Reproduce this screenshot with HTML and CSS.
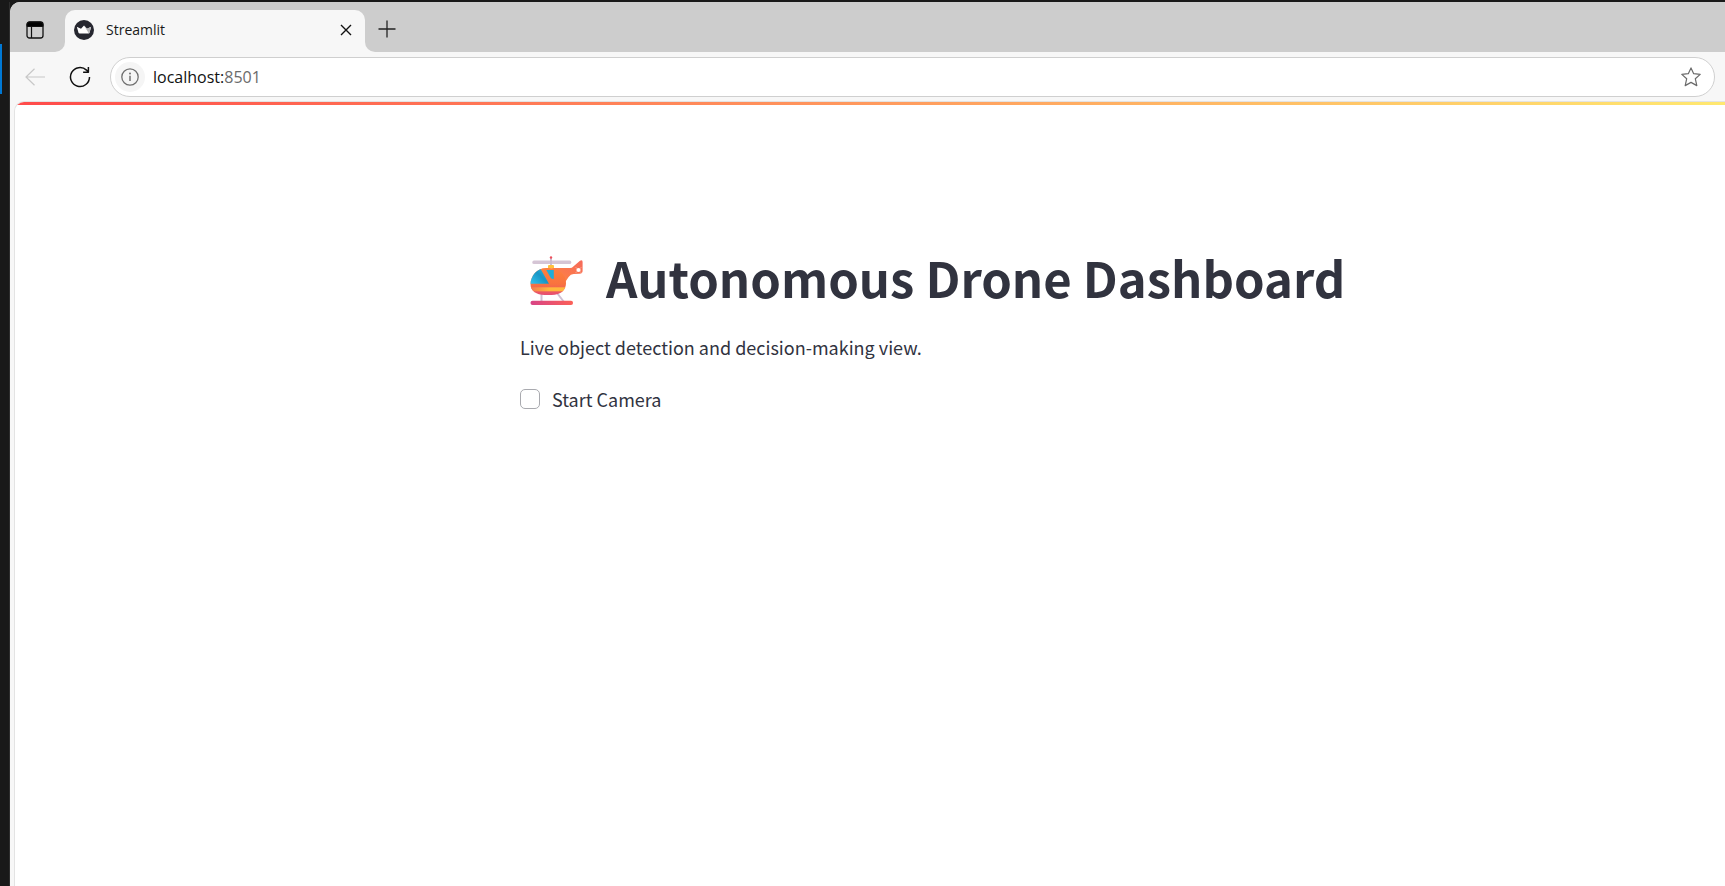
FILE: index.html
```html
<!DOCTYPE html>
<html lang="en">
<head>
<meta charset="utf-8">
<title>Streamlit</title>
<link rel="stylesheet" href="styles.css">
</head>
<body>
<div class="desktop">
  <div class="edge"><div class="edge-accent"></div></div>
  <div class="window">
    <header class="tab-strip">
      <div class="strip-start">
        <button class="icon-button" type="button" aria-label="Tab actions">
          <svg width="18" height="18" viewBox="0 0 18 18"><rect x="1" y="1" width="16" height="16" rx="2.5" fill="none" stroke="#111" stroke-width="1.3"/><path d="M1 5.500V3.500Q1 1 3.500 1h11Q17 1 17 3.500v2z" fill="#000" stroke="#111"/><path d="M5.500 6v11" stroke="#111" stroke-width="1.200"/></svg>
        </button>
      </div>
      <div class="tab">
        <svg width="20" height="20" viewBox="0 0 20 20"><circle cx="10" cy="10" r="10" fill="#262730"/><path d="M2.800 6.800 7 8.800 10 5.600l3 3.200 4.200-2-1.700 6q-.3.800-1.200.8H5.700q-.9 0-1.200-.8z" fill="#fff"/><path d="m13 8.800 4.200-2-1.700 6q-.2.500-.6.700L10 5.600z" fill="#b5b5b8"/></svg>
        <span class="tab-title">Streamlit</span>
        <button class="icon-button" type="button" aria-label="Close tab">
          <svg width="12" height="12" viewBox="0 0 12 12"><path d="m1 1 10 10M11 1 1 11" stroke="#111" stroke-width="1.400"/></svg>
        </button>
      </div>
      <div class="strip-end">
        <button class="icon-button" type="button" aria-label="New tab">
          <svg width="18" height="18" viewBox="0 0 18 18"><path d="M9 .5v17M.5 9h17" stroke="#222" stroke-width="1.300"/></svg>
        </button>
      </div>
    </header>
    <nav class="toolbar">
      <button class="icon-button" type="button" aria-label="Back" disabled>
        <svg width="20" height="18" viewBox="0 0 20 18"><path d="M20 9H1M9.500.8 1 9l8.500 8.200" fill="none" stroke="#c8c8c8" stroke-width="1.200"/></svg>
      </button>
      <button class="icon-button reload" type="button" aria-label="Refresh">
        <svg width="22" height="22" viewBox="0 0 22 22"><path d="M20.500 11a9.500 9.500 0 1 1-3-6.900L19.300 6M19.400 1v5.300h-5.300" fill="none" stroke="#111" stroke-width="1.500" stroke-linejoin="round"/></svg>
      </button>
      <div class="address">
        <button class="icon-button info" type="button" aria-label="Site information">
          <svg width="18" height="18" viewBox="0 0 18 18"><circle cx="9" cy="9" r="8.200" fill="none" stroke="#707070" stroke-width="1.300"/><path d="M9 7.800V13" stroke="#707070" stroke-width="1.500"/><circle cx="9" cy="5.400" r="1" fill="#707070"/></svg>
        </button>
        <span class="url">localhost:<span class="port">8501</span></span>
        <button class="icon-button" type="button" aria-label="Add to favorites">
          <svg width="20" height="20" viewBox="0 0 20 20"><path d="m10 .9 2.700 5.800 6.500.7-4.900 4.300 1.500 6.900L10 15.400l-5.800 3.200 1.500-6.900L.8 7.400l6.500-.7z" fill="none" stroke="#6b6b6b" stroke-width="1.200" stroke-linejoin="round"/></svg>
        </button>
      </div>
    </nav>
    <div class="page">
      <div class="decoration"></div>
      <main class="content">
        <h1 class="title">
          <svg class="helicopter" width="54" height="50" viewBox="0 0 54 50" role="img" aria-label="Helicopter">
            <defs>
              <linearGradient id="body" x1="0" y1="0" x2="0" y2="1"><stop offset="0" stop-color="#ff823f"/><stop offset=".6" stop-color="#f9733e"/><stop offset="1" stop-color="#e44b78"/></linearGradient>
              <linearGradient id="tail" x1="0" y1="1" x2="1" y2="0"><stop offset="0" stop-color="#ff8640"/><stop offset="1" stop-color="#f66a5b"/></linearGradient>
              <linearGradient id="glass" x1="0" y1="1" x2="1" y2="0"><stop offset="0" stop-color="#35c5ef"/><stop offset=".5" stop-color="#1896c6"/><stop offset="1" stop-color="#35c5ef"/></linearGradient>
              <linearGradient id="skid"><stop offset="0" stop-color="#d84486"/><stop offset="1" stop-color="#fb6057"/></linearGradient>
              <linearGradient id="band"><stop offset="0" stop-color="#f37850"/><stop offset=".5" stop-color="#ffb83d"/></linearGradient>
              <clipPath id="hull"><path d="M16 12C7 12 .5 20 .5 28c0 7 6 11 14 11h7C31 39 36 34 36 27c0-8-7-15-17-15z"/></clipPath>
            </defs>
            <path d="M11.500 38v8M27 37l7 9" stroke="#cfc0d4" stroke-width="2"/>
            <rect x="2.300" y="4.600" width="39" height="3.500" rx="1.700" fill="#d5c5d5"/>
            <path d="M21 1v10" stroke="#c9b9cc" stroke-width="1.800"/><circle cx="21" cy="1.500" r="1.200" fill="#ee4f5b"/>
            <path d="M22 12h18q2 0 3.300-1.500L50 4.800q2.600-1.500 2.600 1.200v9q0 2.500-3 2.700l-6 .3q-3 .2-5 3L34 28z" fill="url(#tail)"/>
            <circle cx="48.500" cy="14" r="2.100" fill="#fff"/><path d="M46 11.500l1 1M51 11.500l-1 1M46 16.500l1-1M51 16.500l-1-1" stroke="#fbd3c8" stroke-width="1"/>
            <g clip-path="url(#hull)"><rect y="10" width="40" height="30" fill="url(#body)"/><path d="M0 10h9l1.600 3L19 27.800H0z" fill="url(#glass)"/><rect y="31.300" width="38" height="4" fill="url(#band)"/></g>
            <path d="M16.300 14h7.500v9q-2.500 0-3.300-1.500z" fill="#21add9"/><path d="M18 12v-2q0-1 1-1h4q1 0 1 1v2z" fill="#ffc13c"/>
            <rect x=".5" y="44.700" width="42.500" height="4.300" rx="2" fill="url(#skid)"/>
          </svg>
          <span>Autonomous Drone Dashboard</span>
        </h1>
        <p class="intro">Live object detection and decision-making view.</p>
        <label class="option"><input class="check" type="checkbox"><span>Start Camera</span></label>
      </main>
    </div>
  </div>
</div>
</body>
</html>
```

FILE: styles.css
```css
* { box-sizing: border-box; }

body {
  margin: 0;
  background: #fff;
  font-family: "Open Sans", "Noto Sans", sans-serif;
}

.desktop {
  display: flex;
  min-height: 100vh;
  padding-top: 2px;
  background: #191919;
}

.edge {
  width: 10px;
  flex: none;
  padding-top: 42px;
  border-right: 1px solid #2e2e2e;
}

.edge-accent {
  width: 2px;
  height: 50px;
  background: #0078d4;
}

.window {
  display: flex;
  flex: 1;
  flex-direction: column;
  overflow: hidden;
  border-top-left-radius: 10px;
  background: #f7f7f7;
}

.icon-button {
  display: flex;
  flex: none;
  align-items: center;
  justify-content: center;
  padding: 0;
  border: 0;
  background: none;
}

.tab-strip {
  display: flex;
  height: 50px;
}

.strip-start,
.strip-end {
  display: flex;
  align-items: center;
  background: #cdcdcd;
}

.strip-start {
  width: 55px;
  padding: 6px 0 0 16px;
  border-bottom-right-radius: 10px;
}

.strip-end {
  flex: 1;
  padding: 4px 0 0 13px;
  border-bottom-left-radius: 10px;
}

.tab {
  position: relative;
  z-index: 0;
  display: flex;
  align-items: center;
  width: 300px;
  gap: 12px;
  padding: 6px 13px 0 9px;
}

.tab::before,
.tab::after {
  position: absolute;
  z-index: -1;
  inset: 0 0 20px;
  background: #cdcdcd;
  content: "";
}

.tab::after {
  inset: 8px 0 0;
  border-radius: 10px 10px 0 0;
  background: #f7f7f7;
}

.tab-title {
  flex: 1;
  padding-bottom: 2px;
  color: #1a1a1a;
  font-size: 14px;
}

.toolbar {
  display: flex;
  align-items: center;
  padding: 5px 10px 4px 15px;
}

.reload {
  margin: 0 19px 0 24px;
}

.address {
  display: flex;
  flex: 1;
  align-items: center;
  height: 40px;
  gap: 8px;
  padding: 0 13px 0 4px;
  border: 1px solid #cfcfcf;
  border-radius: 20px;
  background: #fff;
}

.info {
  width: 30px;
  height: 30px;
  border-radius: 50%;
  background: #f5f5f5;
}

.url {
  flex: 1;
  color: #111;
  font-size: 16px;
}

.port {
  color: #6b6b6b;
}

.page {
  flex: 1;
  margin-left: 4px;
  overflow: hidden;
  border: solid #e3e3e3;
  border-width: 1px 0 0 1px;
  border-top-left-radius: 10px;
  background: #fff;
  color: #31333f;
  font-family: "Noto Sans CJK SC", "Noto Sans", sans-serif;
}

.decoration {
  height: 3px;
  background: linear-gradient(90deg, #ff4b4b, #ffe870);
}

.content {
  width: 920px;
  margin: 0 285px 0 auto;
  padding-top: 138px;
}

.title {
  display: flex;
  align-items: center;
  gap: 22px;
  margin: 0;
  padding-left: 10px;
  font-size: 49px;
  font-weight: 700;
  line-height: 68px;
  white-space: nowrap;
}

.helicopter {
  flex: none;
  margin-top: 8px;
}

.intro {
  margin: 20px 0;
  font-size: 18px;
  line-height: 32px;
}

.option {
  display: inline-flex;
  align-items: center;
  gap: 12px;
  font-size: 18px;
  line-height: 32px;
}

.check {
  width: 20px;
  height: 20px;
  margin: 0;
  border: 1px solid #a9aaaf;
  border-radius: 5px;
  appearance: none;
  background: #fff;
}

.check:checked {
  border-color: #ff4b4b;
  background: #ff4b4b;
}
```
